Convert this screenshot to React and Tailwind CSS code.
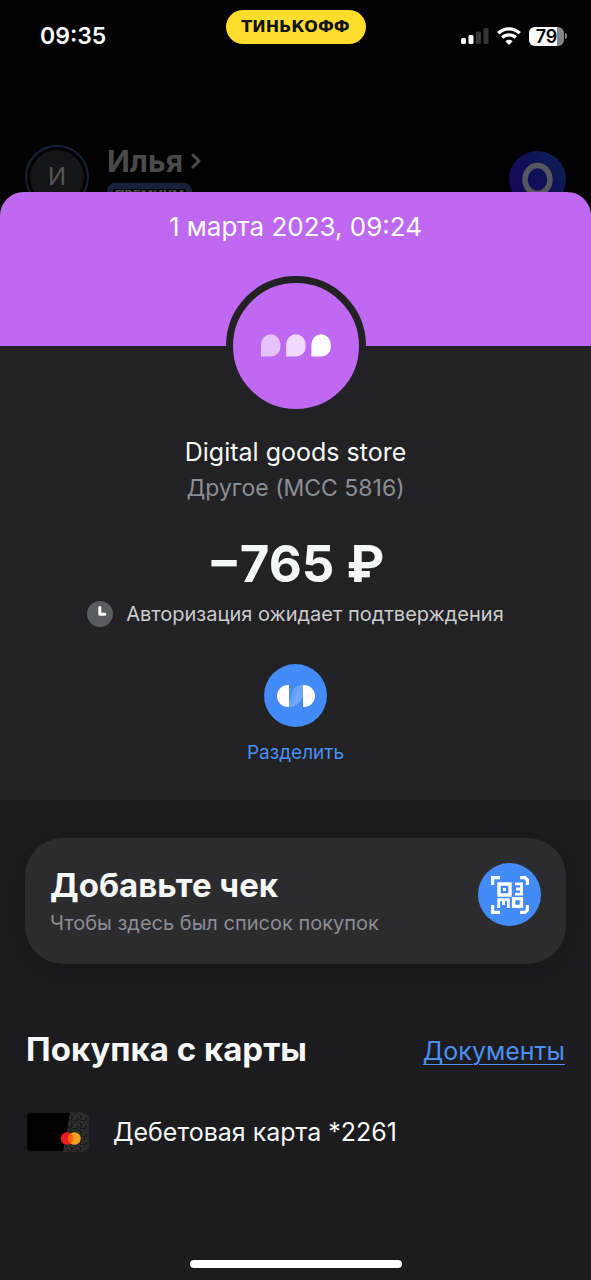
import { ChevronRight } from 'lucide-react';

function StatusBar() {
    return (
        <div className="grid grid-cols-3 px-6 pt-[10px]">
            <div className="pt-3 pl-4 text-[23px] leading-7 font-semibold text-white">09:35</div>
            <div className="flex h-[34px] w-[140px] items-center justify-center justify-self-center rounded-full bg-[#ffdd2d] font-['DejaVu_Sans',sans-serif] text-[16px] leading-5 font-bold text-[#111]">
                ТИНЬКОФФ
            </div>
            <div className="flex h-7 items-center justify-end gap-2 self-end">
                <SignalIcon />
                <WifiIcon />
                <Battery level={79} />
            </div>
        </div>
    );
}

function SignalIcon() {
    return (
        <svg width="28" height="18" viewBox="0 0 28 18">
            <rect x="0" y="11" width="5" height="6" rx="1.5" fill="#fff" />
            <rect x="7.5" y="8" width="5" height="9" rx="1.5" fill="#fff" />
            <rect x="15" y="4.5" width="5" height="12.5" rx="1.5" fill="#353535" />
            <rect x="22.5" y="1" width="5" height="16" rx="1.5" fill="#353535" />
        </svg>
    );
}

function WifiIcon() {
    return (
        <svg width="24" height="18" viewBox="0 0 24 18" fill="none" stroke="#fff" strokeWidth="3.4">
            <path d="M1.3 6.3a15.2 15.2 0 0 1 21.4 0" />
            <path d="M5.3 10.6a9.5 9.5 0 0 1 13.4 0" />
            <path d="M12 18l-3.6-3.7a5.2 5.2 0 0 1 7.2 0z" fill="#fff" stroke="none" />
        </svg>
    );
}

function Battery({ level }) {
    return (
        <div className="flex items-center gap-px">
            <div className="relative h-[19px] w-[35px] overflow-hidden rounded-md bg-[#858585]">
                <div className="h-full bg-white" style={{ width: `${level}%` }} />
                <span className="absolute inset-0 text-center text-[18px] leading-[19px] font-semibold text-black">
                    {level}
                </span>
            </div>
            <div className="h-[6px] w-[2px] rounded-r-full bg-[#858585]" />
        </div>
    );
}

function ProfileHeader() {
    return (
        <header className="flex h-16 items-start justify-between px-[25px]">
            <div className="flex gap-[18px]">
                <div className="flex size-16 items-center justify-center rounded-full border-2 border-[#16213c] p-[3px]">
                    <div className="flex size-full items-center justify-center rounded-full bg-[#141516] text-[24px] text-[#555]">
                        И
                    </div>
                </div>
                <div>
                    <div className="flex items-center gap-px text-[30px] leading-8 font-bold text-[#4a4a4a]">
                        Илья
                        <ChevronRight size={24} strokeWidth={3} />
                    </div>
                    <div className="mt-[6px] w-[85px] rounded-lg border-[6px] border-[#16213c] bg-black text-center text-[13px] leading-3 font-bold text-[#4a4a4a]">
                        ПРЕМИУМ
                    </div>
                </div>
            </div>
            <svg className="mt-[6px]" width="57" height="57" viewBox="0 0 57 57">
                <defs>
                    <linearGradient id="oval" x1="0" y1="1" x2="1" y2="0">
                        <stop offset="0" stopColor="#1c0558" />
                        <stop offset="0.5" stopColor="#0f0f58" />
                        <stop offset="1" stopColor="#0c2550" />
                    </linearGradient>
                </defs>
                <circle cx="28.5" cy="28.5" r="28.5" fill="url(#oval)" />
                <ellipse cx="28.5" cy="28.5" rx="12.5" ry="14" fill="none" stroke="#57575f" strokeWidth="5.5" />
            </svg>
        </header>
    );
}

function StoreLogo() {
    return (
        <svg width="70" height="24" viewBox="0 0 70 24" fill="#fff">
            <path d="M0 22.5V10a9.7 9.7 0 0 1 19.4 0v3a9.5 9.5 0 0 1-9.5 9.5z" opacity="0.6" />
            <path d="M25.2 22.5V10a9.7 9.7 0 0 1 19.4 0v3a9.5 9.5 0 0 1-9.5 9.5z" opacity="0.75" />
            <path d="M50.4 22.5V10a9.7 9.7 0 0 1 19.4 0v3a9.5 9.5 0 0 1-9.5 9.5z" />
        </svg>
    );
}

function ClockIcon() {
    return (
        <svg width="26" height="26" viewBox="0 0 26 26">
            <circle cx="13" cy="13" r="13" fill="#5b5c61" />
            <path d="M12.8 6.5v6.8h5" fill="none" stroke="#fff" strokeWidth="3" strokeLinecap="round" strokeLinejoin="round" />
        </svg>
    );
}

function SplitIcon() {
    return (
        <svg width="38" height="24" viewBox="0 0 38 24">
            <path d="M12 1v22h-1a11 11 0 0 1 0-22z" fill="#fff" />
            <path d="M26 1v22h1a11 11 0 0 0 0-22z" fill="#fff" />
            <path d="M12 23c7 0 5-22 14-22v11c-2 4-4 11-14 11z" fill="#fff" opacity="0.25" />
            <path d="M12 23c4-1 5-5 6-10s3-11 8-12c-6 0-9 2-11 7-1 3-1 8-3 9z" fill="#fff" opacity="0.2" />
        </svg>
    );
}

function QrIcon() {
    return (
        <svg width="38" height="38" viewBox="0 0 38 38" fill="none" stroke="#fff">
            <path d="M1.6 9V1.6H9M29 1.6h5l2.4 2.4V9M36.4 29v5L34 36.4h-5M9 36.4H1.6V29" strokeWidth="3.2" />
            <path d="M8 8h11v11H8z" strokeWidth="3.4" />
            <path d="M22.6 22.6h7.8v7.8h-7.8z" strokeWidth="3.4" />
            <path d="M24 7.8h6.5v10.4H24M25 13h5" strokeWidth="2.8" />
            <path d="M7.7 32v-8.4h9.6V32M12.5 24v5" strokeWidth="2.8" />
            <path d="M12 12h3v3h-3z" fill="#fff" stroke="none" />
        </svg>
    );
}

function BankCard() {
    return (
        <svg width="63" height="40" viewBox="0 0 63 40">
            <defs>
                <clipPath id="card">
                    <rect width="63" height="40" rx="6" />
                </clipPath>
                <pattern id="ornament" width="9" height="8" patternUnits="userSpaceOnUse">
                    <path d="M0 2h3v3h3V1M1 7h4M8 3v4M7 1h2" fill="none" stroke="#484848" strokeWidth="0.8" />
                </pattern>
            </defs>
            <g clipPath="url(#card)">
                <rect width="63" height="40" fill="#000" />
                <path d="M44 0h19v40H37z" fill="#1b1b1c" />
                <path d="M44 0h19v40H37z" fill="url(#ornament)" />
            </g>
            <rect x="0.5" y="0.5" width="62" height="39" rx="6" fill="none" stroke="#2c2c2e" strokeWidth="0.6" />
            <circle cx="41" cy="26.5" r="6.3" fill="#eb1c26" />
            <circle cx="48.5" cy="26.5" r="6.3" fill="#f99f1b" />
            <path d="M44.75 21.4a6.3 6.3 0 0 1 0 10.2a6.3 6.3 0 0 1 0-10.2z" fill="#ff5f00" />
        </svg>
    );
}

export default function App() {
    return (
        <div className="flex min-h-screen flex-col bg-black font-['Inter','Noto_Sans',sans-serif] text-[#f6f7f8]">
            <StatusBar />
            <div className="pt-[95px]">
                <ProfileHeader />
            </div>

            <main className="relative -mt-[17px] flex flex-1 flex-col overflow-hidden rounded-t-[24px] bg-[#1c1c1e]">
                <section className="flex flex-col items-center bg-[#222224] pb-[35px]">
                    <div className="h-[154px] w-full bg-[#bf68f2] pt-[19px] text-center text-[26px] leading-8 text-white">
                        1 марта 2023, 09:24
                    </div>
                    <div className="-mt-[70px] flex size-[140px] items-center justify-center rounded-full border-[7px] border-[#222224] bg-[#bf68f2]">
                        <StoreLogo />
                    </div>
                    <h1 className="mt-5 text-[25px] leading-8">Digital goods store</h1>
                    <p className="mt-1 text-[23px] leading-8 text-[#8b8d95]">Другое (MCC 5816)</p>
                    <p className="mt-7 text-[51px] leading-[64px] font-bold">−765 ₽</p>
                    <div className="mt-[2px] flex items-center gap-[13px]">
                        <ClockIcon />
                        <span className="text-[20px] leading-8 text-[#cbcbcd]">Авторизация ожидает подтверждения</span>
                    </div>
                    <button className="mt-[34px] flex flex-col items-center gap-[14px] text-[#4a8ff5]">
                        <span className="flex size-[63px] items-center justify-center rounded-full bg-[#428bf9]">
                            <SplitIcon />
                        </span>
                        <span className="text-[19px] leading-6">Разделить</span>
                    </button>
                </section>

                <section className="mx-[25px] mt-[38px] flex items-start justify-between rounded-[38px] bg-[#2c2c2e] p-[25px] shadow-[0_6px_32px_rgba(0,0,0,0.2)]">
                    <div>
                        <h2 className="text-[33px] leading-[44px] font-bold">Добавьте чек</h2>
                        <p className="text-[20px] leading-8 text-[#8b8d95]">Чтобы здесь был список покупок</p>
                    </div>
                    <button
                        aria-label="Добавить чек"
                        className="flex size-[63px] items-center justify-center rounded-full bg-[#428bf9]"
                    >
                        <QrIcon />
                    </button>
                </section>

                <section className="px-[26px] pt-[63px]">
                    <div className="flex items-center justify-between">
                        <h2 className="text-[33px] leading-[44px] font-bold">Покупка с карты</h2>
                        <a href="#documents" className="pt-1 text-[25px] leading-8 text-[#4a8ff5] underline decoration-1 underline-offset-4">
                            Документы
                        </a>
                    </div>
                    <div className="mt-[41px] flex items-center gap-6">
                        <BankCard />
                        <span className="text-[25px] leading-8">Дебетовая карта *2261</span>
                    </div>
                </section>

                <div className="mx-auto mt-auto mb-3 h-2 w-[212px] rounded-full bg-white" />
            </main>
        </div>
    );
}
